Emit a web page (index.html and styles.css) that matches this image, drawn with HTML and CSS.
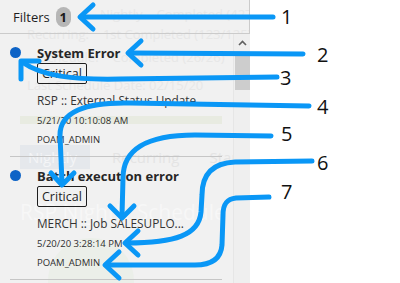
FILE: index.html
```html
<!DOCTYPE html>
<html lang="en">

<head>
    <meta charset="UTF-8">
    <meta name="viewport" content="width=device-width, initial-scale=1.0">
    <title>Alerts Panel</title>
    <link rel="stylesheet" href="styles.css">
</head>

<body>
    <div class="screen">
        <div class="panel">
            <!-- faded dashboard behind the panel -->
            <div class="ghost" aria-hidden="true">
                <div class="ghost-row ghost-row-1"><span>Nightly</span><span>Completed (427/427)</span><span class="ghost-caret">&#9662;</span></div>
                <div class="ghost-row ghost-row-2"><span>Recurring:</span><span>1st Completed (123/125)</span></div>
                <div class="ghost-row ghost-row-3"><span>Schedule:</span><span>Completed (26/26)</span></div>
                <div class="ghost-row ghost-row-4"><span>Last Schedule Date: 02/15/20</span></div>
                <div class="ghost-band"></div>
                <div class="ghost-tabs">
                    <span class="ghost-tab active">Nightly</span>
                    <span class="ghost-tab">Recurring</span>
                    <span class="ghost-tab">Standard</span>
                </div>
                <div class="ghost-title">RSP Nightly Schedule De</div>
                <div class="ghost-circle"></div>
            </div>

            <div class="panel-header">
                <span class="filters-label">Filters</span>
                <span class="badge">1</span>
            </div>

            <div class="panel-body">
                <div class="alert-list">
                    <div class="alert-item">
                        <span class="dot"></span>
                        <div class="alert-content">
                            <div class="alert-title">System Error</div>
                            <span class="tag">Critical</span>
                            <div class="alert-desc">RSP :: External Status Update...</div>
                            <div class="alert-meta alert-date">5/21/20 10:10:08 AM</div>
                            <div class="alert-meta alert-user">POAM_ADMIN</div>
                        </div>
                    </div>
                    <div class="alert-item">
                        <span class="dot"></span>
                        <div class="alert-content">
                            <div class="alert-title">Batch execution error</div>
                            <span class="tag">Critical</span>
                            <div class="alert-desc">MERCH :: Job SALESUPLO...</div>
                            <div class="alert-meta alert-date">5/20/20 3:28:14 PM</div>
                            <div class="alert-meta alert-user">POAM_ADMIN</div>
                        </div>
                    </div>
                </div>
                <div class="scrollbar">
                    <div class="scroll-up">
                        <svg width="9" height="6" viewBox="0 0 9 6"><path d="M1 5 L4.5 1.5 L8 5" fill="none" stroke="#606060" stroke-width="1.6"/></svg>
                    </div>
                    <div class="scroll-thumb"></div>
                </div>
            </div>
        </div>

        <svg class="callouts" width="400" height="283" viewBox="0 0 400 283">
            <g class="arrow">
                <path d="M273 17 L81 17" />
                <path d="M93 5 L80 17 L93 29" />

                <path d="M303 54 L130 53" />
                <path d="M141 41 L128 53 L141 65" />

                <path d="M277 77 L120 79 C72 80 42 76 22 62" />
                <path d="M21 79 L21 61 L39 61" />

                <path d="M309 106 L130 103 C85 102 60 112 60 135 L62 183" />
                <path d="M51 173 L62 185 L74 173" />

                <path d="M271 136 L195 135 C145 135 123 150 123 178 L122 216" />
                <path d="M110 206 L122 218 L134 206" />

                <path d="M312 161 L235 162 C212 163 202 175 202 195 L201 212 C199 235 175 243 127 243" />
                <path d="M138 231 L125 243 L138 255" />

                <path d="M269 197 L236 198 C226 199 223 205 223 215 L222 245 C221 258 212 265 195 265 L107 265" />
                <path d="M119 252 L105 265 L119 278" />
            </g>
            <g class="callout-numbers">
                <text x="281" y="24">1</text>
                <text x="317" y="62">2</text>
                <text x="280" y="85">3</text>
                <text x="317" y="114">4</text>
                <text x="281" y="141">5</text>
                <text x="317" y="170">6</text>
                <text x="281" y="199">7</text>
            </g>
        </svg>
    </div>
</body>

</html>
```

FILE: styles.css
```css
body {
    margin: 0;
    padding: 0;
    background-color: #ffffff;
    font-family: "Open Sans", "Noto Sans", Arial, sans-serif;
    color: #2a2a2a;
}

.screen {
    position: relative;
    width: 400px;
    height: 283px;
    overflow: hidden;
    background-color: #ffffff;
}

.panel {
    position: relative;
    width: 250px;
    height: 283px;
    background-color: #f1f1f1;
    display: flex;
    flex-direction: column;
}

/* faded content that shows through the panel */
.ghost {
    position: absolute;
    inset: 0;
    overflow: hidden;
    color: #e7e7e7;
    font-size: 14px;
}

.ghost-row {
    position: absolute;
    display: flex;
    gap: 14px;
    white-space: nowrap;
}

.ghost-row-1 {
    top: 5px;
    left: 100px;
    font-size: 13px;
}

.ghost-caret {
    font-size: 11px;
    margin-left: -4px;
}

.ghost-row-2 {
    top: 25px;
    left: 27px;
    font-size: 13px;
}

.ghost-row-3 {
    top: 48px;
    left: 40px;
    font-size: 13px;
}

.ghost-row-4 {
    top: 76px;
    left: 27px;
    font-size: 13px;
}

.ghost-band {
    position: absolute;
    top: 116px;
    left: 20px;
    width: 202px;
    height: 8px;
    background-color: #e8ebe1;
}

.ghost-tabs {
    position: absolute;
    top: 145px;
    left: 20px;
    display: flex;
    gap: 14px;
    font-size: 15px;
}

.ghost-tab {
    padding: 2px 8px;
    color: #e4e4e4;
}

.ghost-tab.active {
    background-color: #e5e8ec;
    color: #f4f5f7;
    width: 54px;
}

.ghost-title {
    position: absolute;
    top: 198px;
    left: 20px;
    font-size: 21px;
    color: #f7f7f7;
    white-space: nowrap;
}

.ghost-circle {
    position: absolute;
    top: 238px;
    left: 48px;
    width: 86px;
    height: 86px;
    border-radius: 50%;
    background-color: #ebefe9;
}

.panel-header {
    position: relative;
    height: 33px;
    border-bottom: 1px solid #cbcbcb;
    border-right: 1px solid #cbcbcb;
    display: flex;
    align-items: center;
    padding-left: 13px;
    gap: 6px;
}

.filters-label {
    font-size: 13px;
    color: #1e1e1e;
}

.badge {
    width: 15px;
    height: 20px;
    border-radius: 8px;
    background-color: #b6b6b6;
    color: #1a1a1a;
    font-size: 13px;
    font-weight: bold;
    display: flex;
    align-items: center;
    justify-content: center;
}

.panel-body {
    position: relative;
    flex: 1;
    display: flex;
}

.alert-list {
    width: 233px;
}

.alert-item {
    display: flex;
    margin: 0 11px 0 10px;
    padding: 11px 0 8px;
    border-bottom: 1px solid #c6c6c6;
}

.dot {
    flex: none;
    width: 11px;
    height: 11px;
    border-radius: 50%;
    background-color: #0d63c6;
    margin-top: 2px;
    margin-right: 16px;
}

.alert-content {
    min-width: 0;
    flex: 1;
}

.alert-title {
    font-size: 13px;
    font-weight: bold;
    line-height: 16px;
    color: #262626;
    white-space: nowrap;
}

.tag {
    display: inline-block;
    margin-top: 2px;
    height: 19px;
    line-height: 19px;
    padding: 0 4px;
    border: 1px solid #1e1e1e;
    border-radius: 2px;
    font-size: 12.5px;
    color: #1e1e1e;
}

.alert-desc {
    margin-top: 7px;
    font-size: 11.8px;
    line-height: 18px;
    color: #333333;
    white-space: nowrap;
}

.alert-meta {
    font-size: 9.5px;
    line-height: 16px;
    color: #2e2e2e;
    white-space: nowrap;
}

.alert-date {
    margin-top: 4px;
}

.alert-user {
    margin-top: 3px;
}

.scrollbar {
    width: 16px;
    border-left: 1px solid #e6e6e6;
    background-color: #efefef;
}

.scroll-up {
    height: 18px;
    display: flex;
    align-items: center;
    justify-content: center;
}

.scroll-thumb {
    margin: 0 0 0 1px;
    width: 15px;
    height: 38px;
    background-color: #cdcdcd;
}

.callouts {
    position: absolute;
    top: 0;
    left: 0;
    pointer-events: none;
}

.arrow path {
    fill: none;
    stroke: #0a97f6;
    stroke-width: 5;
    stroke-linecap: round;
    stroke-linejoin: round;
}

.callout-numbers text {
    font-family: "Open Sans", "Noto Sans", Arial, sans-serif;
    font-size: 20px;
    fill: #111111;
}
```
